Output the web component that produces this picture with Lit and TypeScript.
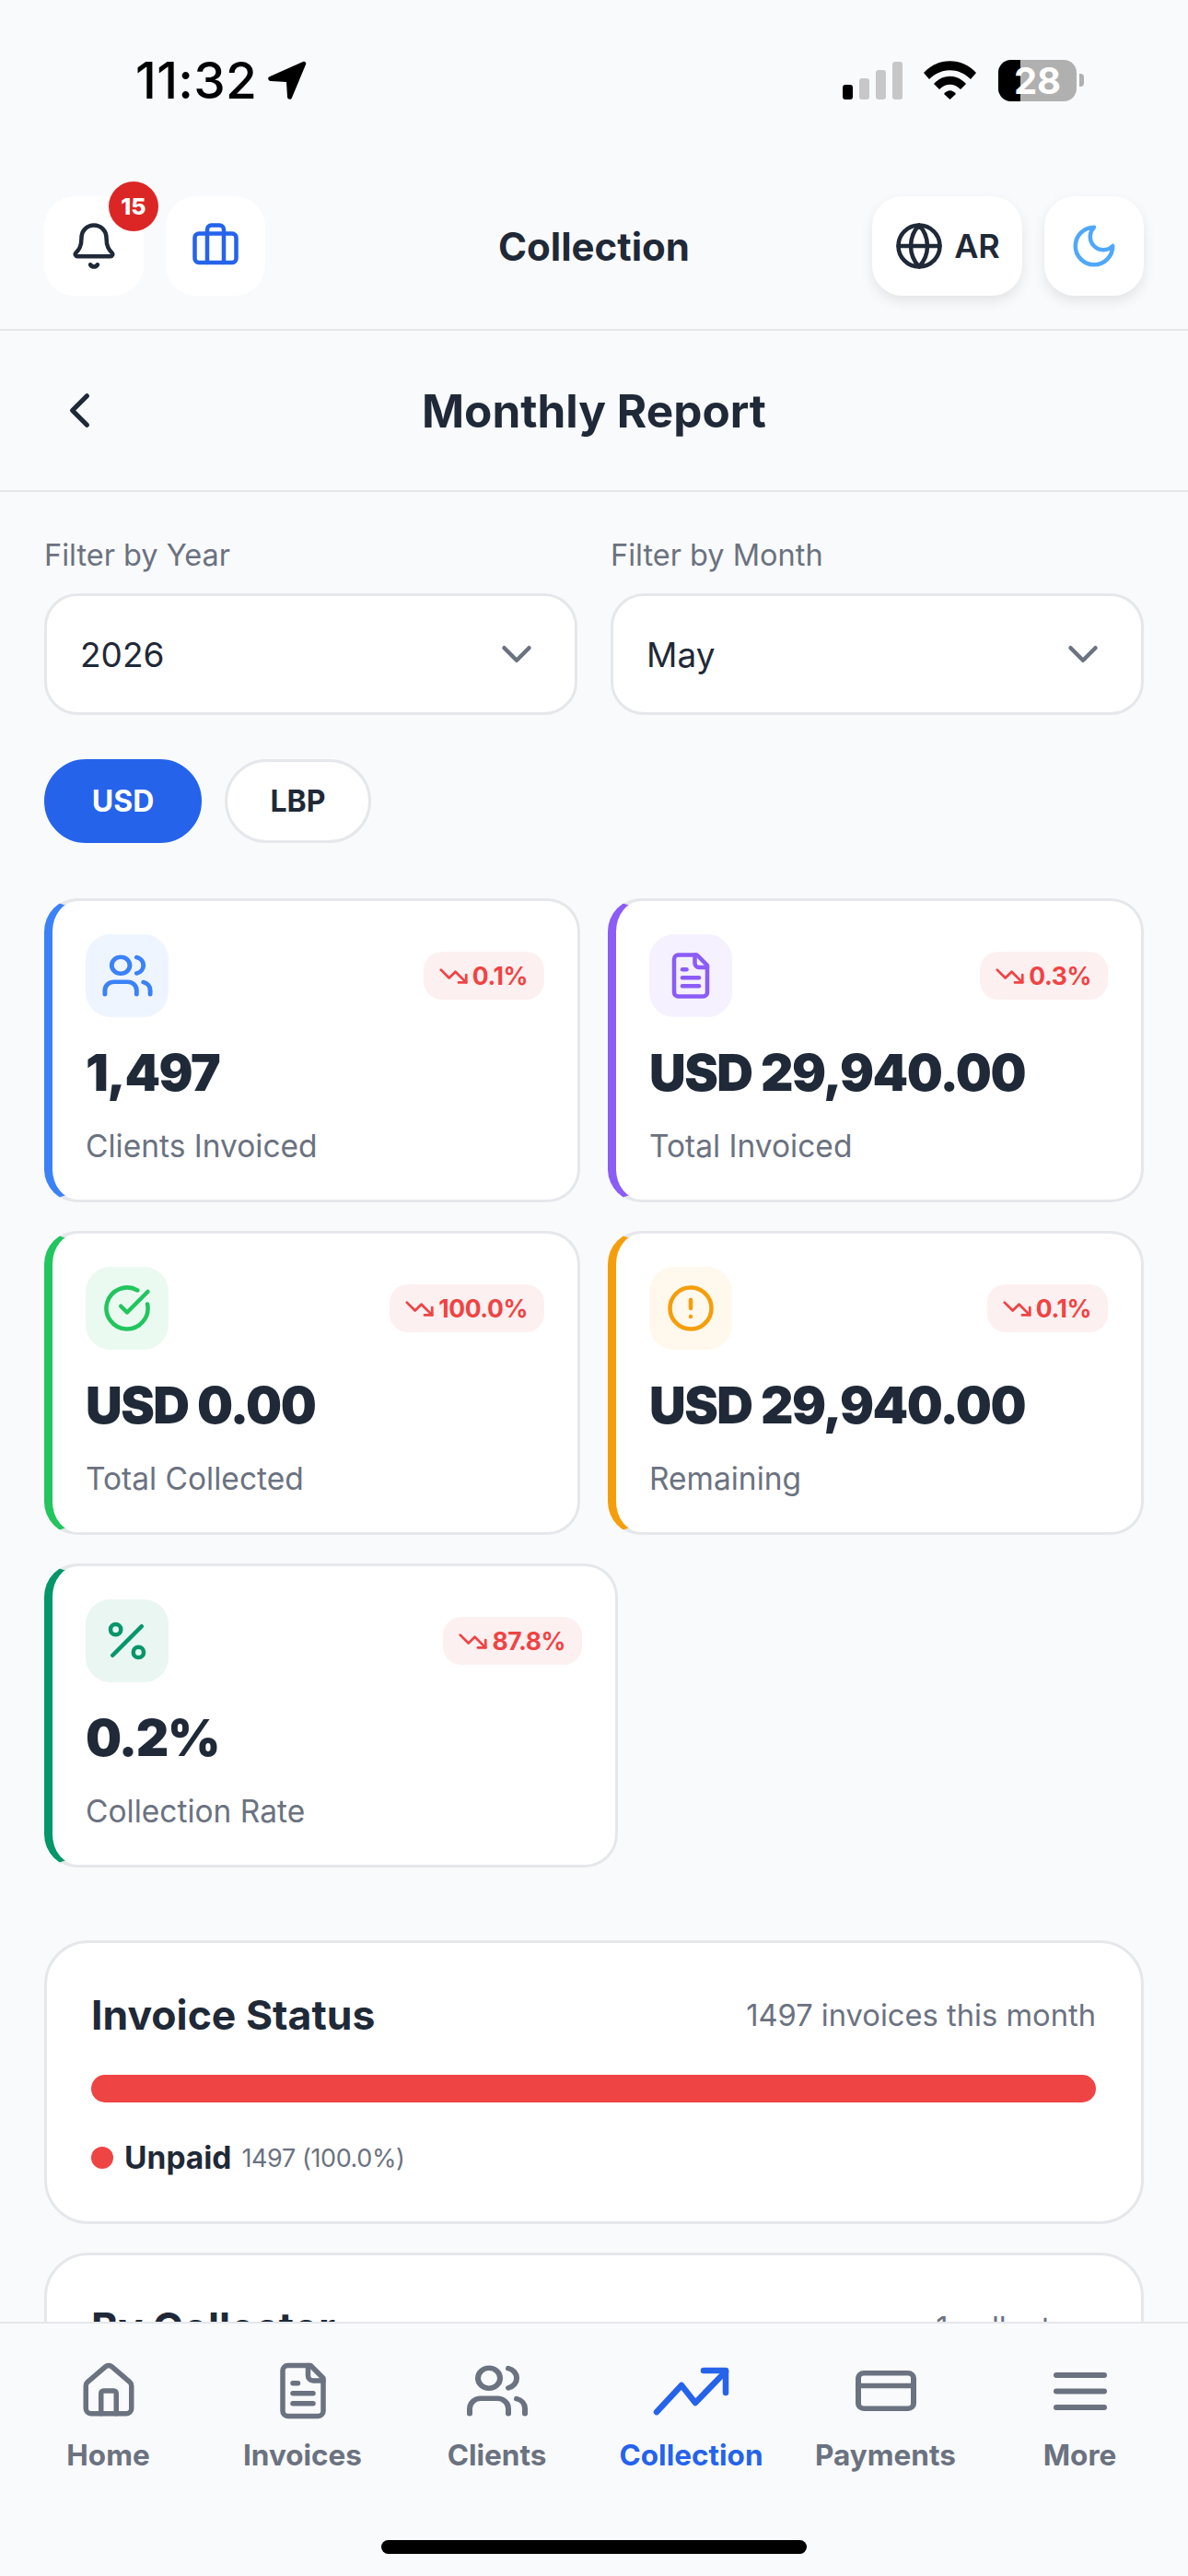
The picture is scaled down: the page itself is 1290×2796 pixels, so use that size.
import { LitElement, css, html, svg } from 'lit'
import { customElement } from 'lit/decorators.js'

type Tone = 'blue' | 'purple' | 'green' | 'amber' | 'emerald'

interface Stat {
  tone: Tone
  icon: ReturnType<typeof svg>
  value: string
  label: string
  change: string
  wide?: boolean
}

const icons = {
  bell: svg`<path d="M10.268 21a2 2 0 0 0 3.464 0"/><path d="M3.262 15.326A1 1 0 0 0 4 17h16a1 1 0 0 0 .74-1.673C19.41 13.956 18 12.499 18 8A6 6 0 0 0 6 8c0 4.499-1.411 5.956-2.738 7.326"/>`,
  briefcase: svg`<path d="M16 20V4a2 2 0 0 0-2-2h-4a2 2 0 0 0-2 2v16"/><rect width="20" height="14" x="2" y="6" rx="2"/>`,
  globe: svg`<circle cx="12" cy="12" r="10"/><path d="M12 2a14.5 14.5 0 0 0 0 20 14.5 14.5 0 0 0 0-20"/><path d="M2 12h20"/>`,
  moon: svg`<path d="M12 3a6 6 0 0 0 9 9 9 9 0 1 1-9-9Z"/>`,
  back: svg`<path d="m15 18-6-6 6-6"/>`,
  chevron: svg`<path d="m6 9 6 6 6-6"/>`,
  users: svg`<path d="M16 21v-2a4 4 0 0 0-4-4H6a4 4 0 0 0-4 4v2"/><circle cx="9" cy="7" r="4"/><path d="M22 21v-2a4 4 0 0 0-3-3.87"/><path d="M16 3.13a4 4 0 0 1 0 7.75"/>`,
  file: svg`<path d="M15 2H6a2 2 0 0 0-2 2v16a2 2 0 0 0 2 2h12a2 2 0 0 0 2-2V7Z"/><path d="M14 2v4a2 2 0 0 0 2 2h4"/><path d="M10 9H8"/><path d="M16 13H8"/><path d="M16 17H8"/>`,
  check: svg`<path d="M21.801 10A10 10 0 1 1 17 3.335"/><path d="m9 11 3 3L22 4"/>`,
  alert: svg`<circle cx="12" cy="12" r="10"/><line x1="12" x2="12" y1="8" y2="12"/><line x1="12" x2="12.01" y1="16" y2="16"/>`,
  percent: svg`<line x1="19" x2="5" y1="5" y2="19"/><circle cx="6.5" cy="6.5" r="2.5"/><circle cx="17.5" cy="17.5" r="2.5"/>`,
  down: svg`<polyline points="22 17 13.5 8.5 8.5 13.5 2 7"/><polyline points="16 17 22 17 22 11"/>`,
  home: svg`<path d="M15 21v-8a1 1 0 0 0-1-1h-4a1 1 0 0 0-1 1v8"/><path d="M3 10a2 2 0 0 1 .709-1.528l7-5.999a2 2 0 0 1 2.582 0l7 5.999A2 2 0 0 1 21 10v9a2 2 0 0 1-2 2H5a2 2 0 0 1-2-2z"/>`,
  card: svg`<rect width="20" height="14" x="2" y="5" rx="2"/><line x1="2" x2="22" y1="10" y2="10"/>`,
}

const icon = (body: unknown, size: number, width = size) =>
  html`<svg class="icon" width=${width} height=${size} viewBox="0 0 24 24" preserveAspectRatio="none">${body}</svg>`

const stats: Stat[] = [
  { tone: 'blue', icon: icons.users, value: '1,497', label: 'Clients Invoiced', change: '0.1%' },
  { tone: 'purple', icon: icons.file, value: 'USD 29,940.00', label: 'Total Invoiced', change: '0.3%' },
  { tone: 'green', icon: icons.check, value: 'USD 0.00', label: 'Total Collected', change: '100.0%' },
  { tone: 'amber', icon: icons.alert, value: 'USD 29,940.00', label: 'Remaining', change: '0.1%' },
  { tone: 'emerald', icon: icons.percent, value: '0.2%', label: 'Collection Rate', change: '87.8%', wide: true },
]

@customElement('app-root')
export class AppRoot extends LitElement {
  static styles = css`
    :host {
      display: block;
      position: relative;
      height: 2796px;
      overflow: hidden;
      background: #f9fafb;
      color: #1f2937;
      font-family: Inter, 'Liberation Sans', sans-serif;
    }

    .icon {
      display: block;
      flex: none;
      fill: none;
      stroke: currentColor;
      stroke-width: 2;
      stroke-linecap: round;
      stroke-linejoin: round;
    }

    .status {
      box-sizing: border-box;
      height: 213px;
      padding: 64px 113px 0 147px;
    }

    .status-row {
      display: flex;
      align-items: center;
      height: 46px;
      color: #000;
    }

    .time {
      font-size: 55px;
      font-weight: 500;
      letter-spacing: 0.3px;
      line-height: 46px;
    }

    .arrow {
      margin-left: 12px;
    }

    .signal {
      display: flex;
      align-items: flex-end;
      gap: 7px;
      height: 41px;
      margin-left: auto;
    }

    .signal span {
      width: 11px;
      border-radius: 3px;
      background: #c7c7c7;
    }

    .signal span:first-child {
      background: #000;
    }

    .wifi {
      margin-left: 23px;
    }

    .battery {
      position: relative;
      box-sizing: border-box;
      width: 85px;
      height: 45px;
      margin-left: 24px;
      border-radius: 14px;
      background: #b0b0b0;
      color: #fff;
      font-size: 40px;
      font-weight: 700;
      line-height: 45px;
      text-align: center;
    }

    .battery-fill {
      position: absolute;
      inset: 0 auto 0 0;
      width: 24px;
      border-radius: 14px 0 0 14px;
      background: #000;
    }

    .battery-text {
      position: relative;
    }

    .nub {
      width: 5px;
      height: 14px;
      margin-left: 3px;
      border-radius: 0 4px 4px 0;
      background: #b0b0b0;
    }

    .header {
      display: grid;
      grid-template-columns: 1fr auto 1fr;
      align-items: center;
      height: 144px;
      padding: 0 48px 0;
      align-content: start;
      border-bottom: 2px solid #e5e7eb;
    }

    .header-group {
      display: flex;
      gap: 24px;
    }

    .header-group.end {
      justify-content: flex-end;
    }

    .tool {
      position: relative;
      display: flex;
      align-items: center;
      justify-content: center;
      gap: 11px;
      min-width: 108px;
      height: 108px;
      box-sizing: border-box;
      border-radius: 33px;
      background: #fff;
    }

    .tool.raised {
      box-shadow: 0 6px 14px rgba(0, 0, 0, 0.09);
    }

    .tool.lang {
      width: 163px;
      font-size: 36px;
      font-weight: 600;
    }

    .briefcase {
      color: #2563eb;
    }

    .moon {
      color: #4fa8fb;
    }

    .notify {
      position: absolute;
      top: -16px;
      right: -16px;
      width: 54px;
      height: 54px;
      border-radius: 50%;
      background: #dc2626;
      color: #fff;
      font-size: 25px;
      font-weight: 800;
      line-height: 54px;
      text-align: center;
    }

    .title {
      font-size: 42px;
      font-weight: 700;
    }

    .subheader {
      display: grid;
      grid-template-columns: 1fr auto 1fr;
      align-items: center;
      box-sizing: border-box;
      height: 175px;
      padding: 0 48px;
      border-bottom: 2px solid #e5e7eb;
    }

    .subheader .icon {
      margin-left: 7px;
    }

    .subtitle {
      font-size: 49.500px;
      font-weight: 700;
    }

    .content {
      padding: 42px 48px 0;
    }

    .filters {
      display: grid;
      grid-template-columns: 579px 579px;
      justify-content: space-between;
    }

    .filter-label {
      margin-bottom: 14px;
      color: #6b7280;
      font-size: 32.500px;
      line-height: 54px;
    }

    .select {
      display: flex;
      align-items: center;
      justify-content: space-between;
      box-sizing: border-box;
      height: 132px;
      padding: 0 36px;
      border: 3px solid #e5e7eb;
      border-radius: 36px;
      background: #fff;
      font-size: 37px;
    }

    .select .icon {
      color: #6b7280;
    }

    .pills {
      display: flex;
      gap: 25px;
      margin-top: 48px;
    }

    .pill {
      box-sizing: border-box;
      width: 159px;
      height: 91px;
      border: 3px solid #e5e7eb;
      border-radius: 46px;
      background: #fff;
      font-size: 32px;
      font-weight: 700;
      line-height: 85px;
      text-align: center;
    }

    .pill.active {
      width: 171px;
      border-color: #2563eb;
      background: #2563eb;
      color: #fff;
    }

    .stats {
      display: grid;
      grid-template-columns: 582px 582px;
      justify-content: space-between;
      gap: 31px 30px;
      margin-top: 60px;
    }

    .stat {
      box-sizing: border-box;
      height: 330px;
      padding: 36px 36px 31px;
      border: 3px solid #e5e7eb;
      border-left: 9px solid var(--tone);
      border-radius: 36px;
      background: #fff;
    }

    .stat.wide {
      width: 623px;
    }

    .blue {
      --tone: #3b82f6;
      --tone-bg: #eff5ff;
    }

    .purple {
      --tone: #8b5cf6;
      --tone-bg: #f5f1ff;
    }

    .green {
      --tone: #22c55e;
      --tone-bg: #ebfaf1;
    }

    .amber {
      --tone: #f59e0b;
      --tone-bg: #fff8ec;
    }

    .emerald {
      --tone: #059669;
      --tone-bg: #e9f6f2;
    }

    .stat-head {
      display: flex;
      align-items: center;
      justify-content: space-between;
    }

    .stat-icon {
      display: flex;
      align-items: center;
      justify-content: center;
      width: 90px;
      height: 90px;
      border-radius: 27px;
      background: var(--tone-bg);
      color: var(--tone);
    }

    .change {
      display: flex;
      align-items: center;
      gap: 4px;
      height: 52px;
      padding: 0 18px 0 16px;
      border-radius: 20px;
      background: #fdf0f0;
      color: #ef4444;
      font-size: 26.500px;
      font-weight: 700;
      letter-spacing: -0.4px;
    }

    .value {
      margin-top: 30px;
      font-size: 55px;
      font-weight: 900;
      letter-spacing: -1.5px;
      line-height: 60px;
      white-space: nowrap;
    }

    .stat-label {
      margin-top: 23px;
      color: #6b7280;
      font-size: 33.500px;
      line-height: 54px;
    }

    .panel {
      box-sizing: border-box;
      padding: 48px 49px 45px 48px;
      border: 3px solid #e5e7eb;
      border-radius: 48px;
      background: #fff;
    }

    .panel.first {
      margin-top: 79px;
    }

    .panel.next {
      height: 500px;
      margin-top: 31px;
    }

    .panel-head {
      display: flex;
      align-items: center;
      justify-content: space-between;
      height: 60px;
    }

    .panel-title {
      font-size: 44.500px;
      font-weight: 700;
    }

    .panel-note {
      color: #6b7280;
      font-size: 32.700px;
    }

    .bar {
      height: 30px;
      margin-top: 35px;
      border-radius: 15px;
      background: #ef4444;
    }

    .legend {
      display: flex;
      align-items: center;
      height: 48px;
      margin-top: 36px;
    }

    .dot {
      width: 24px;
      height: 24px;
      border-radius: 50%;
      background: #ef4444;
    }

    .legend-name {
      margin-left: 12px;
      font-size: 33.500px;
      font-weight: 700;
    }

    .legend-count {
      margin-left: 11px;
      color: #6b7280;
      font-size: 27px;
      letter-spacing: -0.4px;
    }

    .nav {
      position: absolute;
      left: 0;
      right: 0;
      bottom: 0;
      display: grid;
      grid-template-columns: repeat(6, 1fr);
      box-sizing: border-box;
      height: 276px;
      padding: 40px 12px 0;
      border-top: 2px solid #e5e7eb;
      background: #f9fafb;
    }

    .tab {
      display: flex;
      flex-direction: column;
      align-items: center;
      color: #6b7280;
    }

    .tab.active {
      color: #2563eb;
    }

    .tab-icon {
      display: flex;
      align-items: center;
      justify-content: center;
      height: 66px;
    }

    .tab-label {
      margin-top: 16px;
      font-size: 31.500px;
      font-weight: 700;
      line-height: 42px;
    }

    .home-bar {
      position: absolute;
      left: 414px;
      top: 2757px;
      width: 462px;
      height: 15px;
      border-radius: 8px;
      background: #000;
    }
  `

  private renderStat(stat: Stat) {
    const wide = stat.icon === icons.users
    return html`
      <div class="stat ${stat.tone} ${stat.wide ? 'wide' : ''}">
        <div class="stat-head">
          <div class="stat-icon">${icon(stat.icon, 54, wide ? 59 : 54)}</div>
          <div class="change">${icon(icons.down, 33)}<span>${stat.change}</span></div>
        </div>
        <div class="value">${stat.value}</div>
        <div class="stat-label">${stat.label}</div>
      </div>
    `
  }

  render() {
    const tabs = [
      { label: 'Home', glyph: icon(icons.home, 66) },
      { label: 'Invoices', glyph: icon(icons.file, 66) },
      { label: 'Clients', glyph: icon(icons.users, 66, 72) },
      {
        label: 'Collection',
        active: true,
        glyph: html`<svg class="icon" width="84" height="54" viewBox="0 0 84 54">
          <path d="M4 50 31 21 46 40 79 6" stroke-width="6.5" />
          <path d="M55 5H79V29" stroke-width="6.5" />
        </svg>`,
      },
      { label: 'Payments', glyph: icon(icons.card, 66, 72) },
      {
        label: 'More',
        glyph: html`<svg class="icon" width="66" height="66" viewBox="0 0 66 66">
          <path d="M7 16H59M7 33.500H59M7 51H59" stroke-width="6" />
        </svg>`,
      },
    ]

    return html`
      <div class="status">
        <div class="status-row">
          <span class="time">11:32</span>
          <svg class="arrow" width="42" height="42" viewBox="0 0 42 42">
            <path d="M38 1C40 0 42 2 41 4L26 40C25 43 21 42 21 39L20 23 3 22C0 22-1 18 2 17Z" />
          </svg>
          <div class="signal">
            <span style="height:16px"></span>
            <span style="height:23px"></span>
            <span style="height:32px"></span>
            <span style="height:41px"></span>
          </div>
          <svg class="wifi" width="57" height="42" viewBox="0 0 57 42">
            <path d="M0 13C15-4 42-4 57 13L51 20C38 7 19 7 6 20Z" />
            <path d="M11 25C21 14 36 14 46 25L40 31C33 24 24 24 17 31Z" />
            <path d="M22 36C26 31 31 31 35 36L28.500 42Z" />
          </svg>
          <div class="battery">
            <div class="battery-fill"></div>
            <span class="battery-text">28</span>
          </div>
          <div class="nub"></div>
        </div>
      </div>

      <div class="header">
        <div class="header-group">
          <div class="tool">${icon(icons.bell, 54)}<span class="notify">15</span></div>
          <div class="tool briefcase">${icon(icons.briefcase, 54)}</div>
        </div>
        <div class="title">Collection</div>
        <div class="header-group end">
          <div class="tool raised lang">${icon(icons.globe, 54)}<span>AR</span></div>
          <div class="tool raised moon">${icon(icons.moon, 54)}</div>
        </div>
      </div>

      <div class="subheader">
        ${icon(icons.back, 63)}
        <div class="subtitle">Monthly Report</div>
      </div>

      <div class="content">
        <div class="filters">
          <div>
            <div class="filter-label">Filter by Year</div>
            <div class="select"><span>2026</span>${icon(icons.chevron, 54)}</div>
          </div>
          <div>
            <div class="filter-label">Filter by Month</div>
            <div class="select"><span>May</span>${icon(icons.chevron, 54)}</div>
          </div>
        </div>

        <div class="pills">
          <div class="pill active">USD</div>
          <div class="pill">LBP</div>
        </div>

        <div class="stats">${stats.map((stat) => this.renderStat(stat))}</div>

        <div class="panel first">
          <div class="panel-head">
            <div class="panel-title">Invoice Status</div>
            <div class="panel-note">1497 invoices this month</div>
          </div>
          <div class="bar"></div>
          <div class="legend">
            <span class="dot"></span>
            <span class="legend-name">Unpaid</span>
            <span class="legend-count">1497 (100.0%)</span>
          </div>
        </div>

        <div class="panel next">
          <div class="panel-head">
            <div class="panel-title">By Collector</div>
            <div class="panel-note">1 collectors</div>
          </div>
        </div>
      </div>

      <nav class="nav">
        ${tabs.map(
          (tab) => html`
            <div class="tab ${tab.active ? 'active' : ''}">
              <div class="tab-icon">${tab.glyph}</div>
              <div class="tab-label">${tab.label}</div>
            </div>
          `,
        )}
      </nav>
      <div class="home-bar"></div>
    `
  }
}
